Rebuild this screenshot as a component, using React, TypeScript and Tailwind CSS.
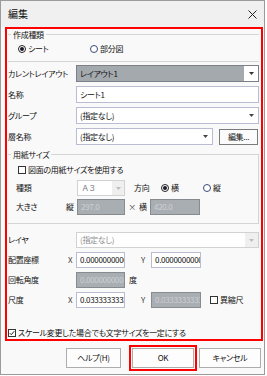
import React from "react";

function Arrow({ c = "#333" }: { c?: string }) {
  return (
    <svg width="5" height="3" viewBox="0 0 5 3" className="block">
      <path d="M0 0h5L2.5 3z" fill={c} />
    </svg>
  );
}

function Radio({ on, ring = "#222" }: { on?: boolean; ring?: string }) {
  return (
    <span
      className="w-[8px] h-[8px] rounded-full border bg-white flex items-center justify-center shrink-0"
      style={{ borderColor: ring }}
    >
      {on && <span className="w-[4px] h-[4px] rounded-full bg-[#1a1a2a]" />}
    </span>
  );
}

function Check({ on }: { on?: boolean }) {
  return (
    <span className="w-[8px] h-[8px] border border-[#333] bg-white shrink-0 flex items-center justify-center">
      {on && (
        <svg width="6" height="6" viewBox="0 0 6 6" className="block">
          <path d="M0.8 3.2L2.3 4.7L5.2 1.2" stroke="#222" strokeWidth="1" fill="none" />
        </svg>
      )}
    </span>
  );
}

function Input({ text, className = "" }: { text: string; className?: string }) {
  return (
    <div
      className={
        "h-full border border-[#b9bcd3] bg-white flex items-center pl-[3px] overflow-hidden whitespace-nowrap " +
        className
      }
    >
      {text}
    </div>
  );
}

function GrayInput({ text, className = "" }: { text: string; className?: string }) {
  return (
    <div
      className={
        "h-full border border-[#868b90] bg-[#a9aeb3] text-[#cdd0d4] flex items-center pl-[3px] overflow-hidden whitespace-nowrap " +
        className
      }
    >
      {text}
    </div>
  );
}

function Combo({ text, className = "" }: { text: string; className?: string }) {
  return (
    <div
      className={
        "h-full border border-[#b9bcd3] bg-white flex items-center pl-[3px] pr-[4px] justify-between " + className
      }
    >
      <span>{text}</span>
      <Arrow c="#444" />
    </div>
  );
}

function DisabledCombo({ text, className = "" }: { text: string; className?: string }) {
  return (
    <div
      className={
        "h-full border border-[#d2d2d2] bg-white text-[#8c8c8c] flex items-center pl-[3px] justify-between " +
        className
      }
    >
      <span>{text}</span>
      <span className="h-full w-[13px] bg-[#efefef] flex items-center justify-center">
        <Arrow c="#bdbdbd" />
      </span>
    </div>
  );
}

function Btn({ label, className = "" }: { label: string; className?: string }) {
  return (
    <div
      className={
        "h-[20px] border border-[#adadad] bg-[#fdfdfd] flex items-center justify-center " + className
      }
    >
      {label}
    </div>
  );
}

export default function App() {
  return (
    <div className="w-[267px] h-[376px] bg-white font-['Noto_Sans_CJK_JP','Noto_Sans',sans-serif] [font-feature-settings:'palt'] tracking-[-0.3px] text-[8px] leading-none text-[#111] whitespace-nowrap">
      <div className="w-[265px] h-[375px] border border-[#9b9b9b] bg-[#f9f9f9] flex flex-col">
        {/* title bar */}
        <div className="h-[26px] bg-[#f0f0f0] flex items-center justify-between pl-[7px] pr-[7px]">
          <span className="text-[10px] tracking-normal">編集</span>
          <svg width="9" height="9" viewBox="0 0 9 9" className="block">
            <path d="M0.5 0.5L8.5 8.5M8.5 0.5L0.5 8.5" stroke="#222" strokeWidth="1" />
          </svg>
        </div>

        {/* red frame */}
        <div className="ml-[4px] w-[258px] h-[314px] border-2 border-[#ff0000] flex flex-col">
          {/* 作成種類 */}
          <div className="relative mt-[5px] ml-[1px] mr-[2px] border-t border-b border-[#d5d5d5] pt-[7px] pb-[5px]">
            <span className="absolute left-[3px] -top-[5px] px-[2px] bg-[#f9f9f9] leading-[9px]">作成種類</span>
            <div className="h-[14px] flex items-center pl-[10px]">
              <div className="w-[72px] flex items-center gap-[2px]">
                <Radio on />
                <span>シート</span>
              </div>
              <div className="flex items-center gap-[2px]">
                <Radio ring="#3b4a78" />
                <span>部分図</span>
              </div>
            </div>
          </div>

          {/* upper rows */}
          <div className="mt-[3px] flex flex-col gap-[4px] pl-[1px] pr-[2px]">
            <div className="h-[17px] flex items-center">
              <span className="w-[68px]">カレントレイアウト</span>
              <div className="flex-1 h-full border border-[#7c8085] bg-[#a4a9ae] flex items-center pl-[3px] justify-between">
                <span>レイアウト1</span>
                <span className="h-full w-[14px] bg-white flex items-center justify-center">
                  <Arrow c="#333" />
                </span>
              </div>
            </div>
            <div className="h-[17px] flex items-center">
              <span className="w-[68px]">名称</span>
              <Input text="シート1" className="flex-1" />
            </div>
            <div className="h-[17px] flex items-center">
              <span className="w-[68px]">グループ</span>
              <Combo text="(指定なし)" className="flex-1" />
            </div>
            <div className="h-[17px] flex items-center">
              <span className="w-[68px]">層名称</span>
              <Combo text="(指定なし)" className="w-[137px]" />
              <div className="ml-[6px] w-[39px] h-[16px] border border-[#7a7a7a] bg-[#fbfbfb] flex items-center justify-center">
                編集...
              </div>
            </div>
          </div>

          {/* 用紙サイズ */}
          <div className="relative mt-[9px] ml-[1px] mr-[2px] border-t border-r border-b border-[#d5d5d5] pl-[8px] pt-[8px] pb-[8px]">
            <span className="absolute left-[3px] -top-[5px] px-[2px] bg-[#f9f9f9] leading-[9px]">用紙サイズ</span>
            <div className="h-[14px] flex items-center pl-[2px] gap-[2px]">
              <Check />
              <span>図面の用紙サイズを使用する</span>
            </div>
            <div className="mt-[3px] h-[16px] flex items-center">
              <span className="w-[61px]">種類</span>
              <div className="w-[48px] h-full border border-[#d2d2d2] bg-white text-[#777] flex items-center justify-between pl-[4px]">
                <span className="tracking-[1px]">Ａ３</span>
                <span className="h-full w-[12px] bg-[#efefef] flex items-center justify-center">
                  <Arrow c="#bdbdbd" />
                </span>
              </div>
              <span className="ml-[9px] w-[27px]">方向</span>
              <div className="w-[42px] flex items-center gap-[2px]">
                <Radio on />
                <span>横</span>
              </div>
              <div className="flex items-center gap-[2px]">
                <Radio ring="#3b4a78" />
                <span>縦</span>
              </div>
            </div>
            <div className="mt-[3px] h-[16px] flex items-center">
              <span className="w-[50px]">大きさ</span>
              <span className="w-[11px]">縦</span>
              <GrayInput text="297.0" className="w-[48px]" />
              <span className="w-[14px] text-center text-[#444]">×</span>
              <span className="w-[11px]">横</span>
              <GrayInput text="420.0" className="w-[50px]" />
            </div>
          </div>

          {/* lower rows */}
          <div className="mt-[8px] flex flex-col gap-[4px] pl-[1px] pr-[2px]">
            <div className="h-[16px] flex items-center">
              <span className="w-[68px]">レイヤ</span>
              <DisabledCombo text="(指定なし)" className="flex-1" />
            </div>
            <div className="h-[16px] flex items-center">
              <span className="w-[60px]">配置座標</span>
              <span className="w-[8px] text-[#444]">X</span>
              <Input text="0.0000000000" className="w-[49px]" />
              <span className="ml-[16px] w-[10px] text-[#444]">Y</span>
              <Input text="0.0000000000" className="w-[50px]" />
            </div>
            <div className="h-[16px] flex items-center">
              <span className="w-[68px]">回転角度</span>
              <GrayInput text="0.0000000000" className="w-[49px]" />
              <span className="ml-[4px]">度</span>
            </div>
            <div className="h-[16px] flex items-center">
              <span className="w-[60px]">尺度</span>
              <span className="w-[8px] text-[#444]">X</span>
              <Input text="0.0333333333" className="w-[49px]" />
              <span className="ml-[16px] w-[10px] text-[#444]">Y</span>
              <GrayInput text="0.0333333333" className="w-[50px]" />
              <div className="ml-[9px] flex items-center gap-[2px]">
                <Check />
                <span>異縮尺</span>
              </div>
            </div>
          </div>

          <div className="flex-1" />
          <div className="h-[13px] flex items-center pl-[1px] gap-[2px]">
            <Check on />
            <span>スケール変更した場合でも文字サイズを一定にする</span>
          </div>
        </div>

        {/* buttons */}
        <div className="mt-[7px] flex items-center pl-[65px]">
          <Btn label="ヘルプ(H)" className="w-[55px]" />
          <Btn label="OK" className="ml-[11px] w-[62px] outline-2 outline-[#ff0000] outline-offset-1" />
          <Btn label="キャンセル" className="ml-[5px] w-[62px]" />
        </div>
      </div>
    </div>
  );
}
